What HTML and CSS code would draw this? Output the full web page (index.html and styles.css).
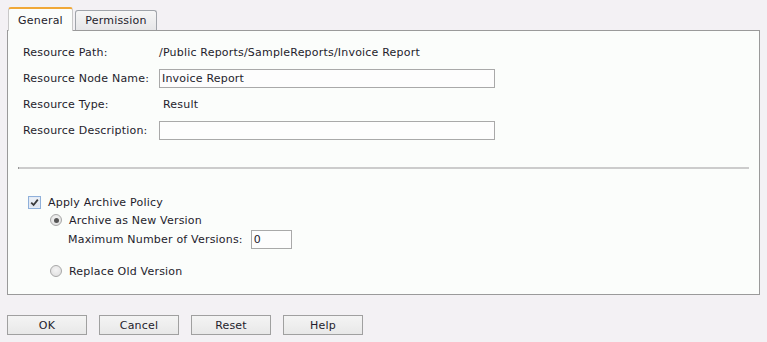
FILE: index.html
```html
<!DOCTYPE html>
<html>
<head>
<meta charset="utf-8">
<link rel="stylesheet" href="styles.css">
</head>
<body>
<div class="page">
  <div class="tabs">
    <div class="tab active">General</div>
    <div class="tab">Permission</div>
  </div>
  <div class="panel">
    <div class="fields">
      <div class="label">Resource Path:</div>
      <div class="value">/Public Reports/SampleReports/Invoice Report</div>
      <div class="label">Resource Node Name:</div>
      <div class="value"><input class="text" type="text" value="Invoice Report"></div>
      <div class="label">Resource Type:</div>
      <div class="value indent">Result</div>
      <div class="label">Resource Description:</div>
      <div class="value"><input class="text" type="text" value=""></div>
    </div>
    <div class="sep"></div>
    <div class="archive">
      <div class="check-row">
        <span class="checkbox"><svg width="9" height="9" viewBox="0 0 9 9"><path d="M1.2 4.6 L3.6 7 L7.8 1.6" fill="none" stroke="#3a3a3a" stroke-width="1.8"/></svg></span>
        <span>Apply Archive Policy</span>
      </div>
      <div class="options">
        <div class="radio-row">
          <span class="radio checked"><span class="dot"></span></span>
          <span>Archive as New Version</span>
        </div>
        <div class="max-row">
          <span>Maximum Number of Versions:</span>
          <input class="small" type="text" value="0">
        </div>
        <div class="radio-row second">
          <span class="radio"></span>
          <span>Replace Old Version</span>
        </div>
      </div>
    </div>
  </div>
  <div class="buttons">
    <button class="btn">OK</button>
    <button class="btn">Cancel</button>
    <button class="btn">Reset</button>
    <button class="btn">Help</button>
  </div>
</div>
</body>
</html>
```
FILE: styles.css
```css
html, body {
  margin: 0;
  padding: 0;
  background: #f3f1f4;
  width: 767px;
  height: 342px;
  overflow: hidden;
}
body {
  font-family: "DejaVu Sans", Verdana, sans-serif;
  font-size: 11px;
  letter-spacing: 0.2px;
  color: #241c2c;
}
.page {
  padding: 7px 7px 0 7px;
}
.tabs {
  display: flex;
  align-items: flex-end;
  height: 23px;
  gap: 2px;
  padding-left: 1px;
}
.tab {
  box-sizing: border-box;
  height: 20px;
  width: 82px;
  justify-content: center;
  border: 1px solid #a0a4aa;
  border-bottom: none;
  border-radius: 3px 3px 0 0;
  background: linear-gradient(#f6f6f6, #e6e6e8);
  display: flex;
  align-items: center;
  line-height: 1;
}
.tab.active {
  height: 24px;
  margin-bottom: -1px;
  background: #fbfdfb;
  border-top: 2px solid #f0a838;
  border-color: #f0a838 #c8c8c8 transparent #c8c8c8;
  width: 65px;
  position: relative;
  z-index: 1;
}
.panel {
  box-sizing: border-box;
  height: 265px;
  border: 1px solid #9a9a9a;
  background: #fbfdfb;
  padding: 8px 0 0 15px;
}
.fields {
  display: grid;
  grid-template-columns: 136px 336px;
  grid-auto-rows: 26px;
  align-items: center;
}
.value.indent {
  padding-left: 4px;
}
.text {
  box-sizing: border-box;
  width: 336px;
  height: 19px;
  border: 1px solid #a9a9a9;
  background: #fdfdfd;
  font: inherit;
  letter-spacing: inherit;
  color: inherit;
  padding: 0 2px;
  margin: 0;
  display: block;
}
.sep {
  margin: 24px 10px 0 -5px;
  height: 2px;
  background: #cccccc;
  border-left: 1px solid #999;
}
.archive {
  padding: 26px 0 0 5px;
}
.check-row {
  display: flex;
  align-items: center;
  gap: 7px;
  height: 14px;
}
.checkbox {
  box-sizing: border-box;
  width: 13px;
  height: 13px;
  border: 1px solid #8fb0da;
  background: linear-gradient(#eef2f8, #dde3ec);
  box-shadow: inset 0 0 0 1px #e4ebf5;
  display: flex;
  align-items: center;
  justify-content: center;
}
.options {
  padding-left: 22px;
}
.radio-row {
  display: flex;
  align-items: center;
  gap: 7px;
  height: 14px;
  margin-top: 4px;
}
.radio-row.second {
  margin-top: 14px;
}
.radio {
  box-sizing: border-box;
  width: 12px;
  height: 12px;
  border-radius: 50%;
  border: 1px solid #a8a8a8;
  background: radial-gradient(circle at 50% 40%, #f4f4f4, #dcdcdc);
  display: flex;
  align-items: center;
  justify-content: center;
}
.dot {
  width: 5px;
  height: 5px;
  border-radius: 50%;
  background: #555;
}
.max-row {
  display: flex;
  align-items: center;
  gap: 8px;
  padding-left: 18px;
  margin-top: 1px;
  height: 22px;
}
.small {
  box-sizing: border-box;
  width: 41px;
  height: 19px;
  border: 1px solid #a9a9a9;
  background: #fdfdfd;
  font: inherit;
  letter-spacing: inherit;
  color: inherit;
  padding: 0 2px;
  margin: 0;
}
.buttons {
  display: flex;
  gap: 12px;
  margin-top: 20px;
}
.btn {
  box-sizing: border-box;
  width: 80px;
  height: 20px;
  border: 1px solid #a0a0a0;
  background: linear-gradient(#f4f4f4, #e8e8e8);
  font: inherit;
  letter-spacing: inherit;
  color: inherit;
  padding: 0;
  margin: 0;
}
```
